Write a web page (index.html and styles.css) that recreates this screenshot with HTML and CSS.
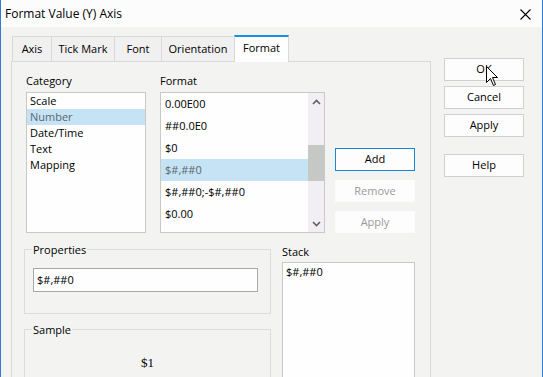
FILE: index.html
```html
<!DOCTYPE html>
<html>
<head>
<meta charset="utf-8">
<title>Format Value (Y) Axis</title>
<link rel="stylesheet" href="styles.css">
</head>
<body>
<div class="window">
  <div class="titlebar">
    <span class="title">Format Value (Y) Axis</span>
    <svg class="close" width="11" height="11" viewBox="0 0 11 11"><path d="M0.5 0.5 L10.5 10.5 M10.5 0.5 L0.5 10.5" stroke="#000" stroke-width="1.1" fill="none"/></svg>
  </div>
  <div class="content">
    <div class="tabarea">
      <div class="tabs">
        <div class="tab w-axis">Axis</div>
        <div class="tab w-tick">Tick Mark</div>
        <div class="tab w-font">Font</div>
        <div class="tab w-orient">Orientation</div>
        <div class="tab w-format sel">Format</div>
      </div>
      <div class="panel">
        <div class="toprow">
          <div class="col">
            <div class="label">Category</div>
            <div class="list catlist">
              <div class="citem">Scale</div>
              <div class="citem selected">Number</div>
              <div class="citem">Date/Time</div>
              <div class="citem">Text</div>
              <div class="citem">Mapping</div>
            </div>
          </div>
          <div class="col fmtcol">
            <div class="label">Format</div>
            <div class="list fmtlist">
              <div class="fitems">
                <div class="fitem">0.00E00</div>
                <div class="fitem">##0.0E0</div>
                <div class="fitem">$0</div>
                <div class="fitem selected">$#,##0</div>
                <div class="fitem">$#,##0;-$#,##0</div>
                <div class="fitem">$0.00</div>
                <div class="fitem">$#,##0.00</div>
              </div>
              <div class="scrollbar">
                <div class="arrow">
                  <svg width="9" height="6" viewBox="0 0 9 6"><path d="M1 5 L4.5 1.5 L8 5" stroke="#606060" stroke-width="1.6" fill="none"/></svg>
                </div>
                <div class="track"><div class="thumb"></div></div>
                <div class="arrow">
                  <svg width="9" height="6" viewBox="0 0 9 6"><path d="M1 1 L4.5 4.5 L8 1" stroke="#606060" stroke-width="1.6" fill="none"/></svg>
                </div>
              </div>
            </div>
          </div>
          <div class="btncol">
            <div class="btn focus">Add</div>
            <div class="btn disabled">Remove</div>
            <div class="btn disabled">Apply</div>
          </div>
        </div>
        <div class="bottomrow">
          <div class="groups">
            <fieldset class="group props">
              <legend>Properties</legend>
              <div class="textbox">$#,##0</div>
            </fieldset>
            <fieldset class="group sample">
              <legend>Sample</legend>
              <div class="sampletext">$1</div>
            </fieldset>
          </div>
          <div class="stack">
            <div class="label">Stack</div>
            <div class="list stacklist"><div class="sitem">$#,##0</div></div>
          </div>
        </div>
      </div>
    </div>
    <div class="sidebtns">
      <div class="btn side">OK</div>
      <div class="btn side">Cancel</div>
      <div class="btn side">Apply</div>
      <div class="btn side help">Help</div>
    </div>
  </div>
  <svg class="cursor" width="13" height="21" viewBox="0 0 13 21"><path d="M0.5 0.5 L0.5 16.5 L4.5 12.5 L7.5 19.5 L9.5 18.5 L6.5 11.5 L11.5 11.5 Z" fill="#fff" stroke="#000" stroke-width="1" stroke-linejoin="miter"/></svg>
</div>
</body>
</html>
```
FILE: styles.css
```css
* { box-sizing: border-box; }
html, body { margin: 0; padding: 0; }
body {
  font-family: "Open Sans", "Noto Sans", sans-serif;
  font-size: 11px;
  color: #000;
  background: #f3f4f2;
}
.window {
  position: relative;
  width: 543px;
  height: 377px;
  overflow: hidden;
  border-left: 1px solid #2e7bcf;
  border-right: 1px solid #2e7bcf;
  background: #f3f4f2;
}
.titlebar {
  height: 27px;
  background: #fbfcfb;
  display: flex;
  align-items: center;
  justify-content: space-between;
  padding: 0 11px 0 4px;
}
.title { font-size: 12px; line-height: 16px; }
.close { display: block; margin-top: 1px; }

.content {
  display: flex;
  align-items: flex-start;
  padding: 8px 0 0 10px;
}
.tabarea { width: 420px; }
.tabs {
  display: flex;
  align-items: flex-end;
  height: 26px;
  padding-left: 2px;
  position: relative;
  z-index: 1;
}
.tab {
  height: 25px;
  margin-left: -1px;
  border: 1px solid #d9d9d9;
  border-bottom: none;
  background: #f0f0f0;
  text-align: center;
  line-height: 24px;
}
.tab.sel {
  height: 27px;
  margin-bottom: -1px;
  border-top: 2px solid #1a8fdd;
  background: #fdfefd;
  line-height: 22px;
}
.w-axis { width: 40px; }
.w-tick { width: 64px; }
.w-font { width: 48px; }
.w-orient { width: 74px; }
.w-format { width: 55px; }

.panel {
  height: 330px;
  border: 1px solid #d9d9d9;
  border-bottom: none;
  background: #f3f4f2;
  padding: 11px 0 0 0;
}
.toprow {
  display: flex;
  align-items: flex-start;
  padding-left: 14px;
}
.label { line-height: 15px; height: 15px; margin-bottom: 4px; }
.col { width: 120px; }
.fmtcol { width: 165px; margin-left: 14px; }
.list {
  background: #fdfefd;
  border: 1px solid #c8c8c8;
}
.catlist { height: 141px; }
.citem { height: 16px; line-height: 16px; padding-left: 3px; }
.selected { background: #c5e3f4; color: #5b6770; }
.fmtlist { height: 141px; display: flex; overflow: hidden; }
.fitems { flex: 1; }
.fitem { height: 22px; line-height: 22px; padding-left: 4px; }
.scrollbar {
  width: 16px;
  background: #f1eff3;
  display: flex;
  flex-direction: column;
}
.arrow {
  height: 17px;
  display: flex;
  align-items: center;
  justify-content: center;
}
.arrow svg { display: block; }
.track { flex: 1; padding-top: 35px; }
.thumb { height: 36px; background: #c6c8c6; }

.btncol {
  width: 80px;
  margin-left: 10px;
  margin-top: 75px;
  display: flex;
  flex-direction: column;
  gap: 9px;
}
.btn {
  height: 23px;
  border: 1px solid #d0d0d0;
  background: #fdfdfd;
  text-align: center;
  line-height: 20px;
}
.btn.focus { border-color: #1a84d6; }
.btn.disabled { height: 22px; border-color: #fbfbfb; color: #9a9a9a; }

.bottomrow {
  display: flex;
  align-items: flex-start;
  margin-top: 9px;
  padding-left: 12px;
}
.groups { width: 247px; }
.group {
  margin: 0;
  border: 1px solid #dcdcdc;
  padding: 0 8px;
  min-width: 0;
}
.group legend {
  padding: 0 1px;
  margin-left: -1px;
  line-height: 15px;
}
.props { padding-bottom: 21px; }
.textbox {
  margin-top: 11px;
  width: 225px;
  height: 24px;
  border: 1px solid #a9a9a9;
  background: #fdfefd;
  line-height: 22px;
  padding-left: 3px;
}
.sample { margin-top: 8px; height: 80px; }
.sampletext {
  margin-top: 18px;
  text-align: center;
  font-family: "Liberation Serif", serif;
  font-size: 13px;
  line-height: 15px;
}
.stack { margin-left: 11px; margin-top: 2px; width: 133px; }
.stack .label { margin-bottom: 3px; }
.stacklist { height: 130px; padding: 1px 0 0 3px; }
.sitem { line-height: 16px; }

.sidebtns {
  width: 80px;
  margin-left: 13px;
  margin-top: 23px;
  display: flex;
  flex-direction: column;
  gap: 5px;
}
.btn.side { height: 23px; }
.btn.help { margin-top: 12px; }

.cursor {
  position: absolute;
  left: 485px;
  top: 66px;
}
```
